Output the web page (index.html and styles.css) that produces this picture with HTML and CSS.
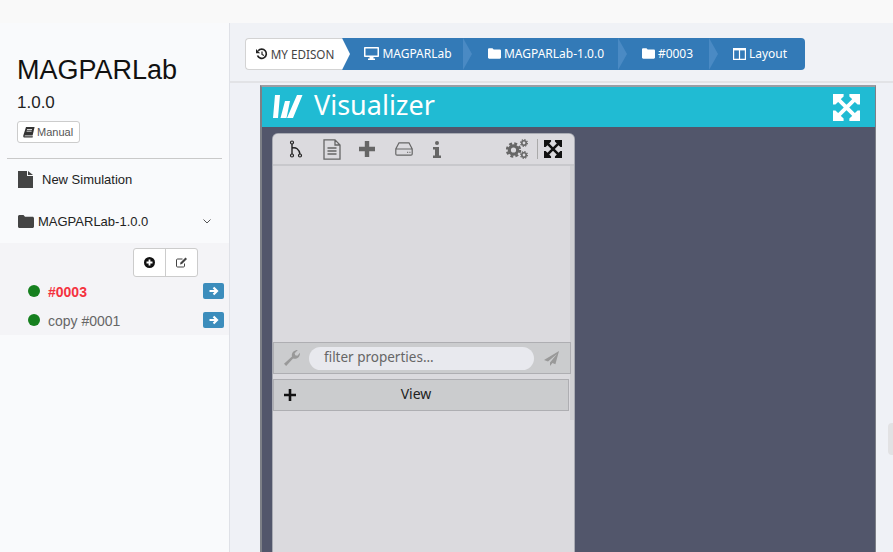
FILE: index.html
```html
<!DOCTYPE html>
<html lang="en">
<head>
    <meta charset="UTF-8">
    <title>MAGPARLab</title>
    <link rel="stylesheet" href="styles.css">
</head>
<body>
    <div class="top-strip"></div>
    <div class="page">
        <!-- Sidebar -->
        <aside class="sidebar">
            <h1 class="app-title">MAGPARLab</h1>
            <div class="app-version">1.0.0</div>
            <button class="manual-btn">
                <svg class="ico-book" viewBox="0 0 12 11"><path d="M3 0h8.600l-2 8.400H2.200c-.8 0-.9.900-.3.900h8l-.3 1.200H1.600C.5 10.500 0 9.500.3 8.400z" fill="#333"/><path d="M4 2.500h5M3.600 4.200h5" stroke="#fff" stroke-width=".8"/></svg>
                Manual
            </button>
            <hr class="side-line">
            <div class="side-item new-sim">
                <svg class="ico-file" viewBox="0 0 15 17"><path d="M0 0h9v5h6v12H0z M10 0l5 4h-5z" fill="#444"/></svg>
                New Simulation
            </div>
            <div class="side-item folder-row">
                <svg class="ico-folder" viewBox="0 0 16 13"><path d="M1.500 0h4l1.500 1.700h7.500c.8 0 1.500.7 1.500 1.500v8.300c0 .8-.7 1.500-1.500 1.500h-13C.7 13 0 12.300 0 11.500v-10C0 .7.700 0 1.500 0z" fill="#444"/></svg>
                <span>MAGPARLab-1.0.0</span>
                <svg class="ico-chevron" viewBox="0 0 8 5"><path d="M.5.500 4 4l3.500-3.500" fill="none" stroke="#555" stroke-width="1"/></svg>
            </div>
            <div class="job-section">
                <div class="job-tools">
                    <button class="job-tool">
                        <svg width="11" height="11" viewBox="0 0 11 11"><circle cx="5.500" cy="5.500" r="5.500" fill="#111"/><path d="M5.500 2.500v6M2.500 5.500h6" stroke="#fff" stroke-width="1.800"/></svg>
                    </button>
                    <button class="job-tool">
                        <svg width="12" height="11" viewBox="0 0 12 11"><path d="M8.500 6.500V9c0 .6-.4 1-1 1H1.500c-.6 0-1-.4-1-1V3c0-.6.4-1 1-1h5" fill="none" stroke="#444" stroke-width="1"/><path d="M4 7.500 4.500 5.500 9.500.500l1.500 1.500-5 5z" fill="#444"/></svg>
                    </button>
                </div>
                <div class="job-row">
                    <span class="dot"></span>
                    <span class="job-name active">#0003</span>
                    <button class="go-btn"><svg width="10" height="10" viewBox="0 0 10 10"><path d="M.5 5h7M4.500 1.500 8 5 4.500 8.500" fill="none" stroke="#fff" stroke-width="2.200"/></svg></button>
                </div>
                <div class="job-row">
                    <span class="dot"></span>
                    <span class="job-name">copy #0001</span>
                    <button class="go-btn"><svg width="10" height="10" viewBox="0 0 10 10"><path d="M.5 5h7M4.500 1.500 8 5 4.500 8.500" fill="none" stroke="#fff" stroke-width="2.200"/></svg></button>
                </div>
            </div>
        </aside>

        <!-- Main content -->
        <main class="main">
            <div class="crumb-band">
                <nav class="crumbs">
                    <div class="crumb crumb-home">
                        <svg width="12" height="12" viewBox="0 0 12 12"><path d="M2.200 2.800A4.600 4.600 0 1 1 1.500 7.500" fill="none" stroke="#222" stroke-width="1.700"/><path d="M0 1v4.200h4.200z" fill="#222"/><path d="M6 3.500V6.500l2 1" fill="none" stroke="#222" stroke-width="1.200"/></svg>
                        MY EDISON
                    </div>
                    <div class="crumb crumb-app">
                        <svg width="15" height="13" viewBox="0 0 15 13"><path d="M1 0h13c.6 0 1 .4 1 1v8c0 .6-.4 1-1 1H9.500v1.500h1.500V13H4v-1.500h1.500V10H1c-.6 0-1-.4-1-1V1c0-.6.4-1 1-1zm.5 1.500v7h12v-7z" fill="#fff"/></svg>
                        MAGPARLab
                    </div>
                    <div class="crumb crumb-sim">
                        <svg width="13" height="11" viewBox="0 0 16 13"><path d="M1.500 0h4l1.500 1.700h7.500c.8 0 1.500.7 1.500 1.500v8.300c0 .8-.7 1.500-1.500 1.500h-13C.7 13 0 12.300 0 11.500v-10C0 .7.700 0 1.500 0z" fill="#fff"/></svg>
                        MAGPARLab-1.0.0
                    </div>
                    <div class="crumb crumb-job">
                        <svg width="13" height="11" viewBox="0 0 16 13"><path d="M1.500 0h4l1.500 1.700h7.500c.8 0 1.500.7 1.500 1.500v8.300c0 .8-.7 1.500-1.500 1.500h-13C.7 13 0 12.300 0 11.500v-10C0 .7.700 0 1.500 0z" fill="#fff"/></svg>
                        #0003
                    </div>
                    <div class="crumb crumb-layout">
                        <svg width="13" height="12" viewBox="0 0 13 12"><path d="M.6.600h11.800v10.800H.6zM6.500.600v10.800" fill="none" stroke="#fff" stroke-width="1.200"/><path d="M.6.600h11.800v1.800H.6z" fill="#fff"/></svg>
                        Layout
                    </div>
                </nav>
            </div>

            <div class="visualizer">
                <header class="vis-head">
                    <svg class="vis-logo" viewBox="0 0 30 26"><path d="M2 1h5L5 24H0zM12 7h5l-3.500 17H7.500zM24 1h5.500L20 24h-6z" fill="#fff"/></svg>
                    <span class="vis-title">Visualizer</span>
                    <svg class="vis-expand" viewBox="0 0 28 28"><path d="M0 0h11v2.500L8.500 5 5 8.500 2.500 11H0zM28 0v11h-2.500L23 8.500 19.500 5 17 2.500V0zM0 28V17h2.500L5 19.500 8.500 23l2.500 2.500V28zM28 28H17v-2.500l2.500-2.500 3.500-3.500 2.500-2.500H28z" fill="#fff"/><path d="M6 6l16 16M22 6 6 22" stroke="#fff" stroke-width="4"/></svg>
                </header>
                <div class="vis-body">
                    <section class="panel">
                        <div class="panel-tools">
                            <svg width="14" height="18" viewBox="0 0 14 18"><circle cx="3" cy="2.500" r="1.500" fill="none" stroke="#222" stroke-width="1.200"/><circle cx="3" cy="15.500" r="1.500" fill="none" stroke="#222" stroke-width="1.200"/><circle cx="11" cy="15.500" r="1.500" fill="none" stroke="#222" stroke-width="1.200"/><path d="M3 4v10M3 8c4-1 7 1 8 6" fill="none" stroke="#222" stroke-width="1.400"/></svg>
                            <svg class="tool-file" width="18" height="21" viewBox="0 0 18 21"><path d="M1 .800h11L17 6v14.200H1zM12 .800V6h5M4.500 9h9M4.500 12h9M4.500 15h9" fill="none" stroke="#666" stroke-width="1.300"/></svg>
                            <svg class="tool-plus" width="16" height="16" viewBox="0 0 16 16"><path d="M8 0v16M0 8h16" stroke="#666" stroke-width="4.400"/></svg>
                            <svg class="tool-drive" width="18" height="14" viewBox="0 0 18 14"><path d="M4 .800h10l3.200 6.200v5c0 .6-.5 1.200-1.200 1.200H2c-.7 0-1.200-.6-1.200-1.200V7zM1 7h16" fill="none" stroke="#666" stroke-width="1.200"/><path d="M12 10.300h1.200M14.300 10.300h1.200" stroke="#666"/></svg>
                            <svg class="tool-info" width="8" height="17" viewBox="0 0 8 17"><circle cx="4" cy="2" r="2" fill="#666"/><path d="M0 6h6v8.500h2V17H0v-2.500h2V8.500H0z" fill="#666"/></svg>
                            <svg class="tool-gears" width="22" height="20" viewBox="0 0 22 20"><circle cx="7.500" cy="11" r="4.200" fill="none" stroke="#666" stroke-width="3.200"/><circle cx="7.500" cy="11" r="6.500" fill="none" stroke="#666" stroke-width="2.400" stroke-dasharray="2.900 2.200"/><circle cx="18" cy="4" r="2.200" fill="none" stroke="#666" stroke-width="1.600"/><circle cx="18" cy="4" r="3.400" fill="none" stroke="#666" stroke-width="1.200" stroke-dasharray="1.400 1.250"/><circle cx="18" cy="16" r="2.200" fill="none" stroke="#666" stroke-width="1.600"/><circle cx="18" cy="16" r="3.400" fill="none" stroke="#666" stroke-width="1.200" stroke-dasharray="1.400 1.250"/></svg>
                            <span class="tool-sep"></span>
                            <svg class="tool-expand" width="18" height="18" viewBox="0 0 28 28"><path d="M0 0h11v2.500L8.500 5 5 8.500 2.500 11H0zM28 0v11h-2.500L23 8.500 19.500 5 17 2.500V0zM0 28V17h2.500L5 19.500 8.500 23l2.500 2.500V28zM28 28H17v-2.500l2.500-2.500 3.500-3.500 2.500-2.500H28z" fill="#111"/><path d="M6 6l16 16M22 6 6 22" stroke="#111" stroke-width="4"/></svg>
                        </div>
                        <div class="panel-blank"></div>
                        <div class="filter-row">
                            <svg class="ico-wrench" width="16" height="16" viewBox="0 0 15 15"><path d="M0 13 7.500 6c-.8-3 1.500-6 5.500-6L10 3l.5 2 2 .5L15 2.500c.3 4-3 6.500-6.500 5.500L2 15z" fill="#999"/></svg>
                            <div class="filter-input">filter properties...</div>
                            <svg width="15" height="15" viewBox="0 0 15 15"><path d="M15 0 0 9l4 1.600L13 3 6 11.400V15l2.400-2.900 3 1.200z" fill="#999"/></svg>
                        </div>
                        <div class="view-row">
                            <svg class="view-plus" width="12" height="12" viewBox="0 0 12 12"><path d="M6 0v12M0 6h12" stroke="#111" stroke-width="2.600"/></svg>
                            <span class="view-label">View</span>
                        </div>
                    </section>
                </div>
            </div>
        </main>
    </div>
    <div class="side-handle"></div>
</body>
</html>
```

FILE: styles.css
```css
* {
    box-sizing: border-box;
}
html, body {
    margin: 0;
    height: 552px;
    overflow: hidden;
}
body {
    font-family: "Liberation Sans", Arial, sans-serif;
    color: #222;
    background-color: #eff1f6;
}
button {
    font-family: inherit;
    cursor: pointer;
}
.top-strip {
    height: 23px;
    background-color: #f9f9f9;
}
.page {
    display: flex;
    height: 529px;
}

/* Sidebar */
.sidebar {
    width: 230px;
    flex: none;
    padding-top: 31px;
    background-color: #f9fafc;
    border-right: 1px solid #dfe1e7;
}
.app-title {
    margin: 0 0 0 17px;
    font-size: 27px;
    line-height: 33px;
    font-weight: 400;
    color: #111;
}
.app-version {
    margin: 7px 0 0 17px;
    font-size: 17px;
    line-height: 18px;
}
.manual-btn {
    display: flex;
    align-items: center;
    gap: 2px;
    width: 63px;
    height: 22px;
    margin: 9px 0 0 17px;
    padding: 0 0 0 5px;
    font-size: 11px;
    color: #555;
    background-color: #fff;
    border: 1px solid #ccc;
    border-radius: 3px;
}
.ico-book {
    width: 12px;
    height: 11px;
}
.side-line {
    margin: 15px 7px 0;
    border: 0;
    border-top: 1px solid #c9c9c9;
}
.side-item {
    display: flex;
    align-items: center;
    margin-left: 18px;
    font-size: 13px;
    color: #222;
}
.new-sim {
    height: 17px;
    margin-top: 12px;
    gap: 9px;
}
.ico-file {
    width: 15px;
    height: 17px;
}
.folder-row {
    height: 16px;
    margin-top: 25px;
    gap: 4px;
}
.ico-folder {
    width: 16px;
    height: 13px;
}
.ico-chevron {
    width: 8px;
    height: 5px;
    margin-left: 51px;
}
.job-section {
    height: 92px;
    margin-top: 14px;
    padding-top: 5px;
    background-color: #f4f4f7;
}
.job-tools {
    display: flex;
    width: 65px;
    height: 29px;
    margin-left: 133px;
    background-color: #fff;
    border: 1px solid #ccc;
    border-radius: 3px;
}
.job-tool {
    display: flex;
    align-items: center;
    justify-content: center;
    flex: 1;
    padding: 0;
    background: none;
    border: 0;
}
.job-tool + .job-tool {
    border-left: 1px solid #ccc;
}
.job-row {
    display: flex;
    align-items: center;
    height: 16px;
    margin: 6px 5px 0 28px;
}
.job-row + .job-row {
    margin-top: 13px;
}
.dot {
    width: 12px;
    height: 12px;
    border-radius: 50%;
    background-color: #16801f;
}
.job-name {
    flex: 1;
    margin-left: 8px;
    padding-top: 2px;
    font-size: 14px;
    color: #666;
}
.job-name.active {
    font-weight: bold;
    color: #f4323f;
}
.go-btn {
    display: flex;
    align-items: center;
    justify-content: center;
    width: 21px;
    height: 16px;
    padding: 0;
    background-color: #3c8dbc;
    border: 0;
    border-radius: 2px;
}

/* Breadcrumb */
.main {
    flex: 1;
    min-width: 0;
}
.crumb-band {
    height: 60px;
    padding-top: 15px;
    background-color: #f0f2f6;
    border-bottom: 2px solid #e2e3e6;
}
.crumbs {
    display: flex;
    width: 560px;
    height: 32px;
    margin-left: 15px;
    font-family: "Noto Sans", sans-serif;
    font-size: 12px;
    line-height: 16px;
    color: #fff;
}
.crumb {
    position: relative;
    display: flex;
    align-items: center;
    justify-content: center;
    gap: 3px;
    padding-bottom: 1px;
    background-color: #337ab7;
}
.crumb:not(.crumb-home)::after {
    content: "";
    position: absolute;
    z-index: 1;
    top: 0;
    right: -9px;
    border-style: solid;
    border-width: 16px 0 16px 9px;
    border-color: transparent transparent transparent #4a8ac4;
}
.crumb-home {
    width: 97px;
    padding-left: 2px;
    font-size: 11.7px;
    color: #444;
    background-color: #fff;
    border: 1px solid #d3d3d3;
    border-right: 0;
    border-radius: 4px 0 0 4px;
}
.crumb-home::after {
    content: "";
    position: absolute;
    z-index: 1;
    top: -1px;
    right: -8px;
    border-style: solid;
    border-width: 16px 0 16px 8px;
    border-color: transparent transparent transparent #fff;
}
.crumb-app {
    width: 121px;
    padding-left: 11px;
}
.crumb-sim {
    width: 155px;
    padding-left: 11px;
}
.crumb-job {
    width: 91px;
    padding-left: 8px;
}
.crumb-layout {
    width: 96px;
    padding-left: 6px;
    border-radius: 0 4px 4px 0;
}
.crumb-layout::after {
    display: none;
}

/* Visualizer window */
.visualizer {
    width: 616px;
    height: 469px;
    margin: 2px 0 0 30px;
    border-top: 2px solid #9a9da3;
    border-left: 2px solid #7d8087;
    border-right: 1px solid #7d8087;
}
.vis-head {
    display: flex;
    align-items: center;
    height: 40px;
    padding: 0 15px 0 11px;
    background-color: #20bbd3;
    color: #fff;
}
.vis-logo {
    width: 30px;
    height: 26px;
}
.vis-title {
    flex: 1;
    margin-left: 11px;
    padding-bottom: 5px;
    font-family: "Noto Sans", sans-serif;
    font-size: 27px;
    line-height: 36px;
}
.vis-expand {
    width: 27px;
    height: 27px;
}
.vis-body {
    height: 427px;
    padding: 7px 0 0 11px;
    background-color: #52566b;
}

/* Panel */
.panel {
    width: 301px;
    height: 420px;
    background: linear-gradient(#d0d0d3, #d0d0d3) right top / 4px 286px no-repeat #dbdade;
    border-radius: 5px 5px 0 0;
    box-shadow: 0 0 0 1px #a9abb3;
}
.panel-tools {
    position: relative;
    display: flex;
    align-items: center;
    height: 32px;
    padding: 0 12px 0 16px;
    background-color: #dbdade;
    border-bottom: 2px solid #c8c8cc;
    border-radius: 5px 5px 0 0;
}
.tool-file {
    margin-left: 20px;
}
.tool-plus {
    margin-left: 18px;
}
.tool-drive {
    margin-left: 20px;
}
.tool-info {
    margin-left: 20px;
}
.tool-gears {
    margin-left: auto;
}
.tool-sep {
    width: 1px;
    height: 20px;
    margin: 0 6px 0 9px;
    background-color: #aaa;
}
.panel-blank {
    height: 176px;
}
.filter-row {
    display: flex;
    align-items: center;
    width: 298px;
    height: 32px;
    padding: 0 11px 0 10px;
    background-color: #cbccce;
    border: 1px solid #aeaeb2;
}
.ico-wrench {
    flex: none;
}
.filter-input {
    flex: 1;
    height: 23px;
    margin: 0 10px 0 9px;
    padding-left: 15px;
    font-family: "Noto Sans", sans-serif;
    font-size: 13.5px;
    line-height: 21px;
    color: #666;
    background-color: #e8e9ee;
    border-radius: 12px;
}
.view-row {
    display: flex;
    align-items: center;
    width: 296px;
    height: 32px;
    margin-top: 5px;
    padding-left: 10px;
    background-color: #cbccce;
    border: 1px solid #aeaeb2;
}
.view-label {
    flex: 1;
    padding: 0 32px 3px 0;
    text-align: center;
    font-family: "Noto Sans", sans-serif;
    font-size: 14px;
    color: #222;
}

.side-handle {
    position: absolute;
    top: 423px;
    right: 0;
    width: 5px;
    height: 32px;
    background-color: #e2e2e4;
    border-radius: 4px 0 0 4px;
}
```
